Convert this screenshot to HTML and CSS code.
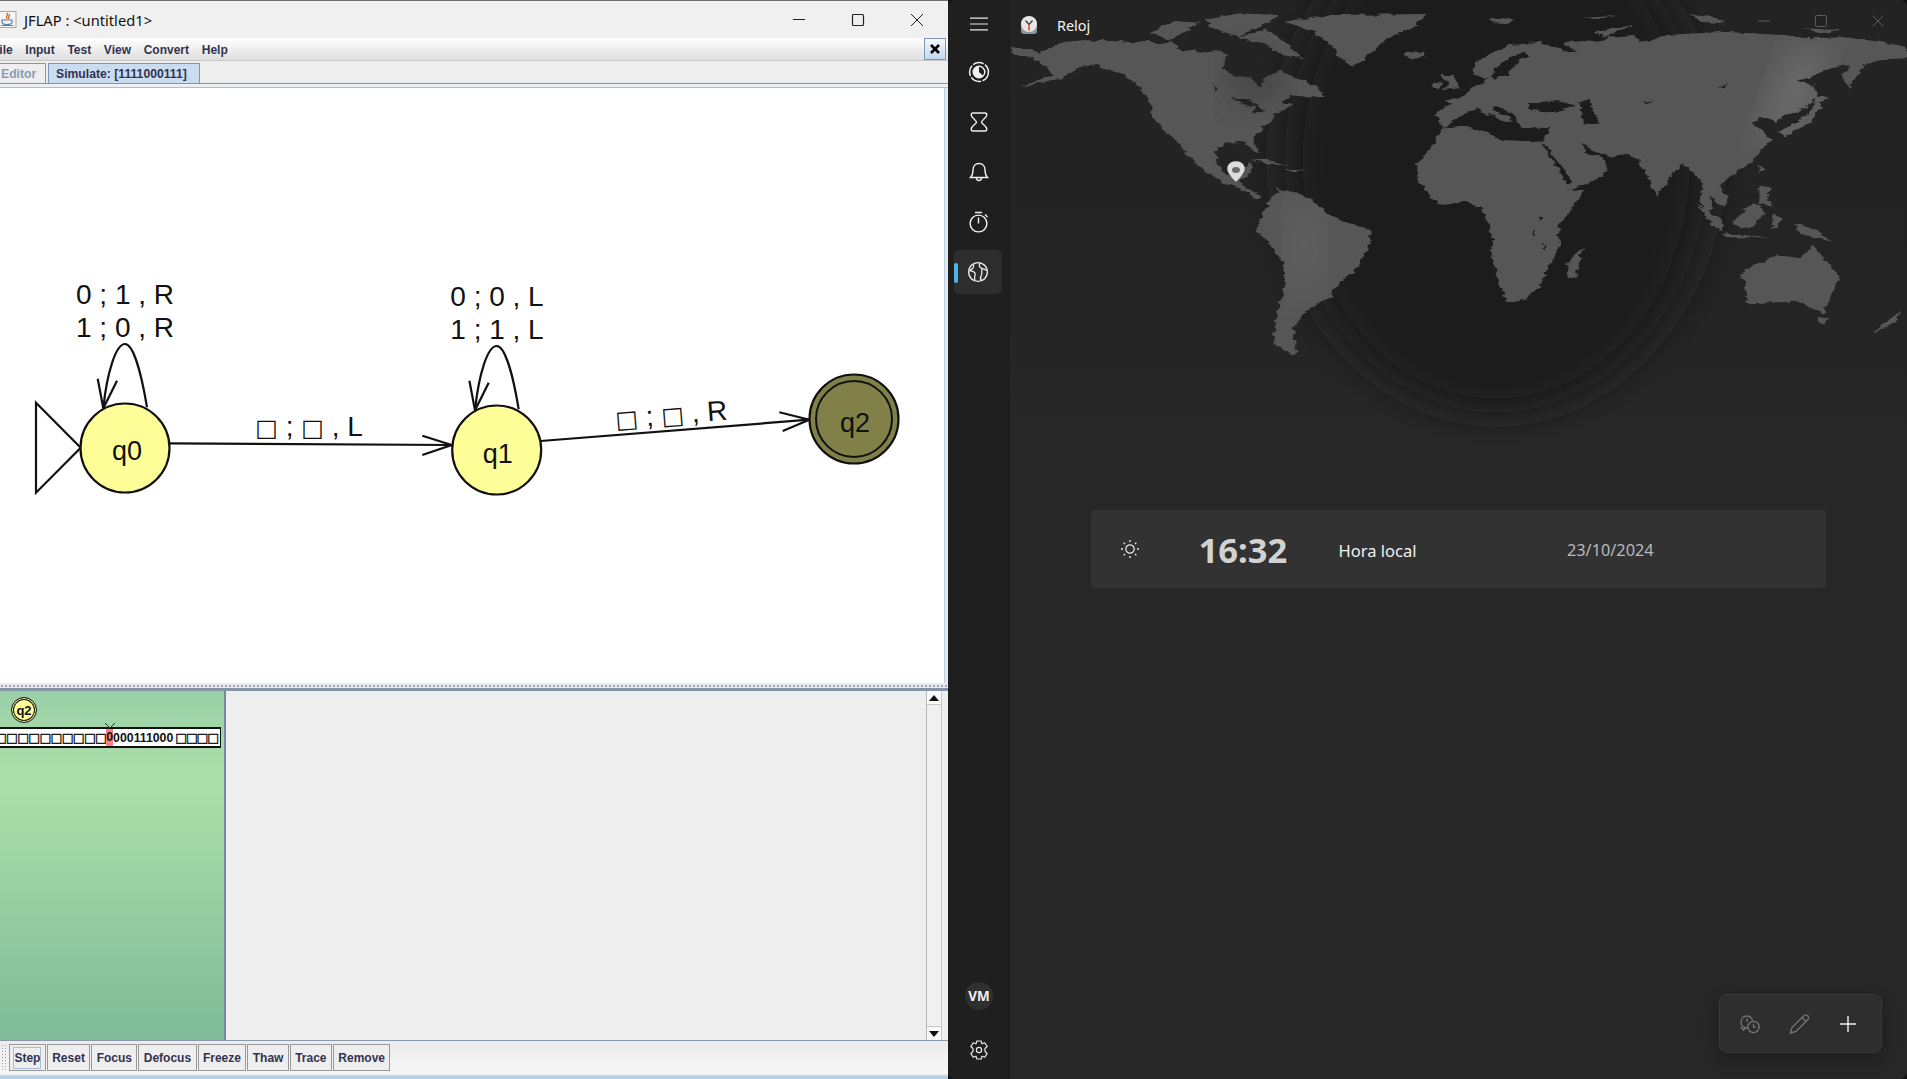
FILE: index.html
```html
<!DOCTYPE html>
<html>
<head>
<meta name="viewport" content="width=device-width, initial-scale=1">
<link rel="stylesheet" href="styles.css">
</head>
<body>

<!-- JFLAP window -->
<div class="jflap">
  <div class="jtitle">
    <svg class="javaicon" width="18" height="18" viewBox="0 0 18 18">
      <rect x="-2" y="0.5" width="18" height="16" fill="#f4f4f4" stroke="#a8a8a8"/>
      <path d="M7 2 C9 4 5 5 7 8 M9 3 C10 5 8 6 9 8" stroke="#d8662a" stroke-width="1.4" fill="none"/>
      <path d="M2 9 H12 V11 C12 13 10 13.5 7 13.5 C4 13.5 2 13 2 11 Z M1 14.5 H13" stroke="#5a7fa8" stroke-width="1.2" fill="none"/>
    </svg>
    <span class="jname">JFLAP : &lt;untitled1&gt;</span>
    <div class="winbtns">
      <svg width="14" height="14" viewBox="0 0 14 14"><path d="M1 6.5 H13" stroke="#222" stroke-width="1"/></svg>
      <svg width="14" height="14" viewBox="0 0 14 14"><rect x="1.5" y="1.5" width="11" height="11" rx="1" fill="none" stroke="#222" stroke-width="1.2"/></svg>
      <svg width="14" height="14" viewBox="0 0 14 14"><path d="M1 1 L13 13 M13 1 L1 13" stroke="#222" stroke-width="1"/></svg>
    </div>
  </div>

  <div class="jmenu">
    <span class="first">File</span><span>Input</span><span>Test</span><span>View</span><span>Convert</span><span>Help</span>
    <div class="menuclose">
      <svg width="12" height="12" viewBox="0 0 12 12"><path d="M2 2 L10 10 M10 2 L2 10" stroke="#000" stroke-width="2.6"/></svg>
    </div>
  </div>

  <div class="jtabs">
    <div class="tab off">Editor</div>
    <div class="tab on">Simulate: [1111000111]</div>
  </div>
  <div class="tabstrip"></div>

  <div class="jbody">
    <div class="canvas">
      <svg class="automaton" width="944" height="595" viewBox="0 88 944 595">
        <!-- start marker -->
        <path class="st" d="M36 402.7 L80.7 447.7 L36 492.7 Z"/>

        <!-- transitions -->
        <path class="st" d="M170 443.3 L451.7 445"/>
        <path class="st" d="M422.3 435.7 L451.7 445 L422.3 455"/>
        <path class="st" d="M540.7 441 L809.3 419.7"/>
        <path class="st" d="M779.3 412.3 L809.3 419.7 L782.7 431"/>

        <g>
          <path class="st" d="M147 407.3 C140 365 132 344 125 344 C116 344 107 372 103.3 408.3"/>
          <path class="st" d="M97.7 378.7 L103.3 408.3 L117 380.7"/>
        </g>
        <g transform="translate(371.7 2)">
          <path class="st" d="M147 407.3 C140 365 132 344 125 344 C116 344 107 372 103.3 408.3"/>
          <path class="st" d="M97.7 378.7 L103.3 408.3 L117 380.7"/>
        </g>

        <!-- states -->
        <circle class="state" cx="125" cy="448" r="44.5"/>
        <circle class="state" cx="496.7" cy="450" r="44.5"/>
        <circle class="state done" cx="854" cy="419" r="44.5"/>
        <circle class="inner" cx="854" cy="419" r="38"/>
        <text class="qname" x="127" y="460">q0</text>
        <text class="qname" x="497.7" y="463">q1</text>
        <text class="qname" x="855" y="432">q2</text>

        <!-- transition labels -->
        <text class="lbl" x="125" y="304">0 ; 1 , R</text>
        <text class="lbl" x="125" y="337">1 ; 0 , R</text>
        <text class="lbl" x="497" y="306">0 ; 0 , L</text>
        <text class="lbl" x="497" y="339">1 ; 1 , L</text>
        <text class="lbl" x="309" y="436"><tspan class="blank">□</tspan> ; <tspan class="blank">□</tspan> , L</text>
        <text class="lbl" x="672" y="424" transform="rotate(-4.4 672 424)"><tspan class="blank">□</tspan> ; <tspan class="blank">□</tspan> , R</text>
      </svg>
    </div>
  </div>

  <div class="divider"></div>

  <div class="lower">
    <div class="configs">
      <div class="config">
        <div class="qmini">q2</div>
        <div class="tape">
          <span class="boxes first">□□□□□□□□□□</span><span class="cell">0</span><span class="run">000111000</span><span class="boxes last">□□□□</span>
          <svg class="head" width="10" height="5" viewBox="0 0 10 5"><path d="M0 0 L5 5 L10 0" fill="none" stroke="#333" stroke-width="1"/></svg>
        </div>
      </div>
    </div>
    <div class="emptypane"></div>
    <div class="scroll">
      <div class="sarrow"><svg width="10" height="6" viewBox="0 0 10 6"><path d="M5 0 L10 6 H0 Z" fill="#111"/></svg></div>
      <div class="strack"></div>
      <div class="sarrow"><svg width="10" height="6" viewBox="0 0 10 6"><path d="M0 0 H10 L5 6 Z" fill="#111"/></svg></div>
    </div>
  </div>

  <div class="jtools">
    <div class="grip"></div>
    <button class="focus"><span>Step</span></button>
    <button>Reset</button>
    <button>Focus</button>
    <button>Defocus</button>
    <button>Freeze</button>
    <button>Thaw</button>
    <button>Trace</button>
    <button>Remove</button>
  </div>
</div>

<!-- Clock window -->
<div class="clock">
  <div class="rail">
    <div class="railitem burger">
      <svg width="20" height="14" viewBox="0 0 20 14"><path d="M1 1.2 H19 M1 7 H19 M1 12.8 H19" stroke="#e6e6e6" stroke-width="1.2"/></svg>
    </div>
    <div class="railitem">
      <svg width="22" height="22" viewBox="0 0 22 22">
        <circle cx="11" cy="11" r="9.4" fill="none" stroke="#f0f0f0" stroke-width="1.5" stroke-dasharray="11 1.6"/>
        <circle cx="11" cy="11" r="5.8" fill="none" stroke="#f0f0f0" stroke-width="1.4"/>
        <path d="M11 5.5 A5.5 5.5 0 1 0 15 14.8 L11 11 Z" fill="#f0f0f0"/>
      </svg>
    </div>
    <div class="railitem">
      <svg width="20" height="22" viewBox="0 0 20 22"><path d="M4 2 H16 C17.5 2 17.8 3 17.8 4 C17.8 7 12.5 9 12.5 11 C12.5 13 17.8 15 17.8 18 C17.8 19 17.5 20 16 20 H4 C2.5 20 2.2 19 2.2 18 C2.2 15 7.5 13 7.5 11 C7.5 9 2.2 7 2.2 4 C2.2 3 2.5 2 4 2 Z" fill="none" stroke="#f0f0f0" stroke-width="1.4"/></svg>
    </div>
    <div class="railitem">
      <svg width="22" height="22" viewBox="0 0 22 22"><path d="M2.5 16.5 H19.5 C17.5 14.5 17 13 17 9 C17 5 14.5 2.5 11 2.5 C7.5 2.5 5 5 5 9 C5 13 4.5 14.5 2.5 16.5 Z M8.5 16.8 C8.5 20.5 13.5 20.5 13.5 16.8" fill="none" stroke="#f0f0f0" stroke-width="1.4"/></svg>
    </div>
    <div class="railitem">
      <svg width="22" height="22" viewBox="0 0 22 22"><circle cx="10.5" cy="12.5" r="8.4" fill="none" stroke="#f0f0f0" stroke-width="1.4"/><path d="M7 1.5 H14 M10.5 6.5 V12.5 M17 3.5 L19.5 6" fill="none" stroke="#f0f0f0" stroke-width="1.4"/></svg>
    </div>
    <div class="railitem active">
      <div class="marker"></div>
      <svg width="22" height="22" viewBox="0 0 22 22"><circle cx="11" cy="11" r="9.4" fill="none" stroke="#f0f0f0" stroke-width="1.4"/><path d="M2.5 9 C6 9 7 6 6.5 3.5 M2.5 9 C4 11 7 10 8 12 C9 14 6.5 15 8 19.5 M13 2 C11 5 13.5 7 15 7.5 C14 10 16 12 14 15 C13 17 14 19 14.5 19.5 M15 7.5 C17 8 18.5 8 20 9.5" fill="none" stroke="#f0f0f0" stroke-width="1.3"/></svg>
    </div>
    <div class="railbottom">
      <div class="avatar">VM</div>
      <div class="railitem">
        <svg width="22" height="22" viewBox="0 0 22 22"><path d="M8.8 2 H13.2 L14 4.8 L16.8 3.8 L19.2 7.5 L17 9.5 V12.5 L19.2 14.5 L16.8 18.2 L14 17.2 L13.2 20 H8.8 L8 17.2 L5.2 18.2 L2.8 14.5 L5 12.5 V9.5 L2.8 7.5 L5.2 3.8 L8 4.8 Z" fill="none" stroke="#e8e8e8" stroke-width="1.2" stroke-linejoin="round"/><circle cx="11" cy="11" r="2.6" fill="none" stroke="#e8e8e8" stroke-width="1.2"/></svg>
      </div>
    </div>
  </div>

  <div class="main">
    <svg class="worldmap" width="897" height="450" viewBox="0 0 1568 1350" preserveAspectRatio="none">
      <defs>
        <filter id="soft" x="-40%" y="-40%" width="180%" height="180%"><feGaussianBlur stdDeviation="34 44"/></filter>
        <filter id="rough" filterUnits="userSpaceOnUse" x="-20" y="-20" width="1608" height="1390">
          <feTurbulence type="fractalNoise" baseFrequency="0.045 0.07" numOctaves="3" seed="7"/>
          <feDisplacementMap in="SourceGraphic" scale="16" xChannelSelector="R" yChannelSelector="G"/>
        </filter>
        <mask id="land" maskUnits="userSpaceOnUse" x="0" y="0" width="1568" height="1350">
          <g filter="url(#rough)">
          <g fill="#fff">
            <!-- north america -->
            <path d="M2 140 L30 150 L55 158 L75 140 L100 122 L160 120 L215 130 L240 118 L262 135 L285 128 L300 150 L335 158 L360 150 L378 165 L372 205 L392 228 L420 232 L438 262 L448 228 L470 212 L495 228 L515 240 L540 262 L548 295 L520 292 L490 285 L478 305 L495 312 L465 340 L452 365 L435 395 L425 425 L438 462 L425 450 L412 425 L375 428 L358 455 L362 495 L378 525 L395 520 L415 490 L425 495 L420 520 L400 545 L420 570 L440 590 L432 595 L405 570 L370 545 L335 505 L310 460 L285 415 L270 395 L250 350 L245 305 L225 260 L200 225 L150 195 L125 200 L90 235 L15 262 L75 225 L65 205 L40 175 L2 160 Z"/>
            <!-- arctic islands, greenland -->
            <path d="M245 100 L290 60 L330 65 L305 95 L280 120 Z"/>
            <path d="M340 60 L400 40 L470 45 L440 75 L400 110 L360 90 Z"/>
            <path d="M400 115 L450 85 L490 140 L510 175 L470 160 L445 130 Z"/>
            <path d="M480 65 L560 45 L730 42 L700 85 L665 110 L640 145 L600 200 L575 170 L555 125 L530 95 Z"/>
            <path d="M688 160 L720 155 L725 170 L700 178 Z"/>
            <path d="M835 55 L880 55 L870 72 L845 70 Z"/>
            <path d="M1000 50 L1060 45 L1020 58 Z"/>
            <path d="M1190 45 L1230 50 L1250 70 L1210 65 Z"/>
            <path d="M1380 85 L1450 90 L1430 100 Z"/>
            <path d="M1020 100 L1060 82 L1090 78 L1040 110 Z"/>
            <!-- south america -->
            <path d="M470 565 L520 590 L560 650 L630 690 L630 730 L600 820 L575 850 L560 890 L520 930 L495 980 L500 1050 L495 1065 L460 1030 L465 960 L480 850 L478 790 L432 690 L440 640 Z"/>
            <!-- eurasia + africa -->
            <path d="M745 345 L760 320 L775 310 L760 300 L790 290 L810 260 L835 240 L815 225 L810 195 L835 165 L875 135 L925 125 L960 145 L985 165 L950 170 L990 150 L965 130 L1000 120 L1030 125 L1050 110 L1090 105 L1100 125 L1150 105 L1200 100 L1250 95 L1290 100 L1350 105 L1400 115 L1460 112 L1520 125 L1568 140 L1568 175 L1530 178 L1498 190 L1480 225 L1465 268 L1458 225 L1470 195 L1430 205 L1395 235 L1375 240 L1405 260 L1410 285 L1395 320 L1355 345 L1340 365 L1310 350 L1298 372 L1318 395 L1330 420 L1312 455 L1290 495 L1255 535 L1240 560 L1255 590 L1250 620 L1240 615 L1225 590 L1225 640 L1245 690 L1225 650 L1205 600 L1215 565 L1195 520 L1175 490 L1150 540 L1130 590 L1115 530 L1100 480 L1080 465 L1045 470 L1010 450 L990 425 L1040 480 L1045 510 L1030 535 L975 570 L1005 568 L980 630 L958 680 L960 745 L940 800 L930 850 L900 900 L870 908 L855 850 L840 750 L845 720 L825 625 L800 603 L755 615 L735 590 L712 540 L712 490 L745 420 L757 385 Z"/>
            <!-- islands -->
            <path d="M750 225 L775 225 L790 265 L755 270 L770 250 Z"/>
            <path d="M742 245 L758 248 L750 268 L738 262 Z"/>
            <path d="M1345 395 L1400 340 L1405 300 L1420 320 L1400 365 L1355 410 Z"/>
            <path d="M1405 290 L1430 290 L1415 310 Z"/>
            <path d="M1405 250 L1412 300 L1402 290 Z"/>
            <path d="M1310 560 L1330 565 L1325 600 L1335 625 L1310 610 Z"/>
            <path d="M1310 495 L1320 510 L1308 515 Z"/>
            <path d="M1200 610 L1245 660 L1245 695 L1225 670 Z"/>
            <path d="M1245 700 L1330 712 L1260 712 Z"/>
            <path d="M1262 670 L1300 605 L1320 630 L1300 680 L1280 685 Z"/>
            <path d="M1335 640 L1350 660 L1330 690 Z"/>
            <path d="M1370 670 L1410 690 L1440 725 L1410 715 L1380 700 Z"/>
            <path d="M1000 745 L990 830 L975 838 L975 790 Z"/>
            <path d="M1280 815 L1340 765 L1380 775 L1405 735 L1450 830 L1420 945 L1400 925 L1375 905 L1290 910 Z"/>
            <path d="M1412 950 L1430 955 L1422 975 Z"/>
            <path d="M1560 930 L1545 970 L1510 1000 L1530 965 Z"/>
            <path d="M420 478 L450 480 L485 498 L450 490 Z"/>
            <path d="M480 505 L520 510 L495 515 Z"/>
          </g>
          <g fill="#000">
            <path d="M757 382 L790 345 L820 325 L835 345 L850 315 L880 345 L895 380 L945 385 L930 425 L860 420 L835 395 L800 378 Z"/>
            <path d="M905 310 L960 300 L990 320 L950 335 L910 330 Z"/>
            <path d="M995 310 L1015 300 L1020 335 L1030 370 L1005 375 L1000 340 Z"/>
            <path d="M928 428 L945 470 L975 555 L985 550 L955 480 L935 430 Z"/>
            <path d="M995 425 L1015 445 L1035 470 L1010 460 Z"/>
            <path d="M850 200 L880 165 L900 155 L905 170 L880 195 L870 225 L840 240 Z"/>
            <path d="M1262 235 L1250 260 L1238 265 L1255 250 Z"/>
            <path d="M1105 305 L1128 300 L1110 310 Z"/>
            <path d="M924 650 L932 652 L926 668 Z"/>
            <path d="M912 680 L918 712 L914 705 Z"/>
            <path d="M934 725 L938 755 L933 750 Z"/>
            <path d="M283 415 L295 430 L310 478 L298 465 Z"/>
            <path d="M388 290 L420 300 L445 335 L425 345 L430 320 L400 310 Z"/>
            <path d="M355 250 L365 275 L358 270 Z"/>
          </g>
          <path fill="#fff" d="M830 315 L880 365 L865 365 L825 325 Z"/>
          </g>
        </mask>
      </defs>
      <ellipse class="nightsky" cx="850" cy="480" rx="370" ry="760" filter="url(#soft)"/>
      <g mask="url(#land)">
        <rect class="landbase" x="0" y="0" width="1568" height="1350"/>
        <ellipse class="landlit" cx="1370" cy="280" rx="34" ry="170" filter="url(#soft)" transform="rotate(12 1370 280)"/>
        <ellipse class="landlit soft" cx="515" cy="740" rx="22" ry="150" filter="url(#soft)"/>
        <ellipse class="landdim" cx="430" cy="235" rx="40" ry="80" filter="url(#soft)"/>
      </g>
      <path class="pin" d="M395 484 C380 484 378 505 381 515 C385 528 390 538 395 545 C400 538 405 528 409 515 C412 505 410 484 395 484 Z"/>
      <ellipse class="pindot" cx="395" cy="510" rx="7" ry="9"/>
    </svg>

    <div class="ctitle">
      <svg class="clockicon" width="20" height="20" viewBox="0 0 20 20">
        <rect x="2" y="5" width="16" height="14" rx="3" fill="#8a95a0"/>
        <circle cx="10" cy="9" r="8" fill="#e6e6e6"/>
        <path d="M10 9.5 L6.5 5.5 M10 9.5 L13.5 5.5" stroke="#444" stroke-width="1.4"/>
        <path d="M10 9.5 V15.5" stroke="#d8432a" stroke-width="1.5"/>
      </svg>
      <span class="appname">Reloj</span>
      <div class="cbtns">
        <svg width="14" height="14" viewBox="0 0 14 14"><path d="M1 7 H13" stroke="#5c5c5c"/></svg>
        <svg width="14" height="14" viewBox="0 0 14 14"><rect x="1.5" y="1.5" width="11" height="11" rx="1" fill="none" stroke="#5c5c5c"/></svg>
        <svg width="14" height="14" viewBox="0 0 14 14"><path d="M1.5 1.5 L12.5 12.5 M12.5 1.5 L1.5 12.5" stroke="#5c5c5c"/></svg>
      </div>
    </div>

    <div class="card">
      <div class="sun">
        <svg width="20" height="20" viewBox="0 0 20 20"><circle cx="10" cy="10" r="4.2" fill="none" stroke="#e8e8e8" stroke-width="1.2"/><path d="M10 1 V3 M10 17 V19 M1 10 H3 M17 10 H19 M3.6 3.6 L5 5 M15 15 L16.4 16.4 M3.6 16.4 L5 15 M15 5 L16.4 3.6" stroke="#e8e8e8" stroke-width="1.3"/></svg>
      </div>
      <div class="time">16:32</div>
      <div class="place">Hora local</div>
      <div class="date">23/10/2024</div>
    </div>

    <div class="fab">
      <svg width="22" height="22" viewBox="0 0 22 22"><path d="M8.5 15 C4.5 15 2 12.5 2 9 C2 5.5 4.5 3 8 3 C11 3 13 5 13.5 7.5 M8 5.5 V9 M2 14 L4.5 17 L7 14.5" fill="none" stroke="#777" stroke-width="1.3"/><circle cx="14.5" cy="14" r="5.6" fill="#2e2e2e" stroke="#777" stroke-width="1.3"/><path d="M14.5 10.8 V14.2 H17" fill="none" stroke="#777" stroke-width="1.2"/></svg>
      <svg width="22" height="22" viewBox="0 0 22 22"><path d="M2.5 20 L4 14.5 L15.5 3 C17 1.5 19 2 20 3 C21 4.5 20.5 6 19.5 7 L8 18.5 Z M14 4.5 L18 8.5" fill="none" stroke="#777" stroke-width="1.3"/></svg>
      <svg width="22" height="22" viewBox="0 0 22 22"><path d="M11 3 V19 M3 11 H19" stroke="#f0f0f0" stroke-width="1.4"/></svg>
    </div>
  </div>
</div>

</body>
</html>
```

FILE: styles.css
```css
* {
  box-sizing: border-box;
}

body {
  margin: 0;
  width: 1907px;
  height: 1079px;
  display: flex;
  overflow: hidden;
  background: #111;
  font-family: "Liberation Sans", sans-serif;
}

/* JFLAP window */
.jflap {
  width: 948px;
  height: 1079px;
  display: flex;
  flex-direction: column;
  background: #eee;
  overflow: hidden;
}

.jtitle {
  height: 38px;
  display: flex;
  align-items: center;
  background: #f0f0f0;
  border-top: 1px solid #707070;
}
.javaicon {
  margin-top: 1px;
}
.jname {
  margin-left: 6px;
  font: 14.7px "Noto Sans", sans-serif;
  color: #111;
}
.winbtns {
  margin-left: auto;
  margin-right: 24px;
  display: flex;
  gap: 45px;
}
.winbtns svg {
  display: block;
}

.jmenu {
  height: 23px;
  display: flex;
  align-items: center;
  gap: 12.7px;
  padding-top: 1px;
  padding-right: 2px;
  background: linear-gradient(#fff, #dedede);
  border-bottom: 1px solid #c8c8c8;
  font-size: 12px;
  font-weight: bold;
  color: #333350;
}
.jmenu .first {
  margin-left: -8px;
}
.menuclose {
  margin-left: auto;
  margin-top: -1px;
  width: 22px;
  height: 22px;
  display: flex;
  align-items: center;
  justify-content: center;
  background: linear-gradient(#f4f8fc, #c4d8ec);
  border: 1px solid #7d97b8;
}

.jtabs {
  height: 23px;
  display: flex;
  align-items: flex-end;
  gap: 2px;
  padding-top: 3px;
  background: #eee;
  border-bottom: 1px solid #7d97b8;
}
.tab {
  height: 20px;
  display: flex;
  align-items: center;
  font-size: 12.2px;
  font-weight: bold;
  border: 1px solid #7d97b8;
  border-bottom: none;
}
.tab.off {
  width: 46px;
  padding-left: 1px;
  color: #8a9cb4;
  border-left: none;
}
.tab.on {
  width: 152px;
  padding-left: 7px;
  color: #333350;
  background: #c9dcf0;
}
.tabstrip {
  height: 3px;
  background: #eef1f4;
}

.jbody {
  height: 596px;
  padding-right: 3px;
  background: #e2e8ee;
  border-top: 1px solid #a8bed4;
}
.canvas {
  height: 595px;
  background: #fff;
  border-right: 1px solid #b8cfe0;
}
.automaton {
  display: block;
}
.st {
  fill: none;
  stroke: #111;
  stroke-width: 2.2;
}
.state {
  fill: #ffff99;
  stroke: #111;
  stroke-width: 2.2;
}
.state.done {
  fill: #808048;
}
.inner {
  fill: none;
  stroke: #111;
  stroke-width: 2;
}
.lbl,
.qname {
  font-family: "Liberation Sans", sans-serif;
  fill: #111;
  text-anchor: middle;
}
.lbl {
  font-size: 28px;
}
.qname {
  font-size: 27px;
}
.blank {
  font-family: "DejaVu Sans", sans-serif;
  font-size: 24px;
}

.divider {
  height: 5px;
  background-color: #ececec;
  background-image: radial-gradient(#9aa4b0 0.8px, transparent 1px);
  background-size: 4px 4px;
  background-position: 0 1px;
}

.lower {
  height: 353px;
  display: flex;
  border-top: 3px solid #8494a6;
  border-bottom: 1px solid #8a9aac;
}
.configs {
  width: 226px;
  background: linear-gradient(#9ad0a8, #addfa9 25%, #7fbb99);
  border-right: 2px solid #76889a;
  overflow: hidden;
}
.config {
  padding-top: 6px;
}
.qmini {
  width: 26px;
  height: 26px;
  margin-left: 11px;
  border-radius: 50%;
  background: #ffff99;
  border: 1px solid #111;
  box-shadow: inset 0 0 0 1px #ffff99, inset 0 0 0 2px #111;
  display: flex;
  align-items: center;
  justify-content: center;
  font-size: 13px;
  font-weight: bold;
  color: #111;
}
.tape {
  position: relative;
  width: 221px;
  height: 21px;
  margin-top: 4px;
  display: flex;
  align-items: center;
  background: #fff;
  border-top: 2px solid #111;
  border-bottom: 2px solid #111;
  border-right: 1px solid #111;
  font-size: 12.3px;
  font-weight: bold;
  color: #111;
}
.boxes {
  font: bold 12.5px "DejaVu Sans", sans-serif;
  letter-spacing: -0.7px;
  -webkit-text-stroke: 0.4px #111;
}
.boxes.first {
  margin-left: -5px;
}
.boxes.last {
  margin-left: 2px;
  letter-spacing: -1.2px;
}
.cell {
  width: 7px;
  height: 17px;
  line-height: 17px;
  text-align: center;
  background: #ff8080;
}
.head {
  position: absolute;
  left: 105px;
  top: -6px;
}
.emptypane {
  flex: 1;
  background: #eee;
}
.scroll {
  width: 16px;
  margin-right: 6px;
  display: flex;
  flex-direction: column;
  background: #f6f6f6;
  border-left: 1px solid #b8b8b8;
  border-right: 1px solid #c8c8c8;
}
.sarrow {
  height: 14px;
  display: flex;
  align-items: center;
  justify-content: center;
  background: #fafafa;
  border-bottom: 1px solid #c8c8c8;
}
.sarrow:last-child {
  border-top: 1px solid #c8c8c8;
  border-bottom: none;
}
.strack {
  flex: 1;
  background: #f0f0f0;
}

.jtools {
  flex: 1;
  display: flex;
  align-items: flex-start;
  gap: 1px;
  padding-top: 3px;
  background: linear-gradient(#ececec, #f6f6f6 33px, #b8cfe6 35px);
}
.grip {
  width: 8px;
  height: 27px;
  background-image: radial-gradient(#a0a0a0 0.7px, transparent 1px);
  background-size: 3px 3px;
  background-position: 1px 0;
}
.jtools button {
  height: 27px;
  padding: 0 4.4px;
  background: #eee;
  border: 1px solid #999;
  font: bold 12px "Liberation Sans", sans-serif;
  color: #333350;
}
.jtools button.focus span {
  display: block;
  outline: 1px solid #a8bed8;
  padding: 3px 0;
}

/* Clock window */
.clock {
  flex: 1;
  height: 1079px;
  display: flex;
  border-radius: 8px;
  overflow: hidden;
  background: #272727;
}
.rail {
  width: 62px;
  display: flex;
  flex-direction: column;
  background: #1f1f1f;
  border-right: 1px solid #1b1b1b;
}
.railitem {
  position: relative;
  height: 50px;
  display: flex;
  align-items: center;
  justify-content: center;
}
.railitem.burger {
  height: 47px;
}
.railitem.active {
  height: 44px;
  margin: 3px 7px 3px 6px;
  background: #2d2d2d;
  border-radius: 5px;
}
.marker {
  position: absolute;
  left: 0;
  top: 13px;
  width: 4px;
  height: 20px;
  border-radius: 2px;
  background: #4cb4e8;
}
.railbottom {
  margin-top: auto;
  padding-bottom: 4px;
}
.avatar {
  width: 28px;
  height: 28px;
  margin: 13px auto 15px;
  padding-left: 1px;
  border-radius: 50%;
  background: #2f2f2f;
  display: flex;
  align-items: center;
  justify-content: center;
  font: bold 13.5px "Noto Sans", sans-serif;
  color: #eee;
}

.main {
  position: relative;
  flex: 1;
  background: linear-gradient(#232323 0, #242424 300px, #272727 450px);
}
.worldmap {
  position: absolute;
  left: 0;
  top: 0;
}
.nightsky {
  fill: #1e1e1e;
}
.landbase {
  fill: #565656;
}
.landlit {
  fill: #6e6e6e;
}
.landlit.soft {
  fill: #666;
}
.landdim {
  fill: #424242;
}
.pin {
  fill: #dcdcdc;
}
.pindot {
  fill: #6a6a6a;
}

.ctitle {
  position: relative;
  height: 48px;
  display: flex;
  align-items: center;
  padding: 2px 0 0 9px;
}
.appname {
  margin-left: 18px;
  font: 14.4px "Noto Sans", sans-serif;
  color: #f4f4f4;
}
.cbtns {
  margin-left: auto;
  margin-right: 22px;
  margin-top: -8px;
  display: flex;
  gap: 43px;
}

.card {
  position: relative;
  margin: 462px 81px 0;
  height: 78px;
  display: grid;
  grid-template-columns: 107.5px 140.1px 228.4px 1fr;
  align-items: center;
  background: #323232;
  border-radius: 4px;
}
.sun {
  padding-left: 29px;
  display: flex;
}
.time {
  font: bold 34.5px "Noto Sans", sans-serif;
  color: #d2d2d2;
}
.place {
  padding-top: 2px;
  font: 16.5px "Noto Sans", sans-serif;
  color: #f0f0f0;
}
.date {
  padding-top: 2px;
  font: 16.3px "Noto Sans", sans-serif;
  color: #b8b8b8;
}

.fab {
  position: absolute;
  right: 25px;
  bottom: 26px;
  width: 163px;
  height: 59px;
  display: flex;
  align-items: center;
  justify-content: space-between;
  padding: 0 22px 0 19px;
  background: #2e2e2e;
  border: 1px solid #393939;
  border-radius: 8px;
  box-shadow: 0 6px 16px rgba(0, 0, 0, 0.25);
}
```
